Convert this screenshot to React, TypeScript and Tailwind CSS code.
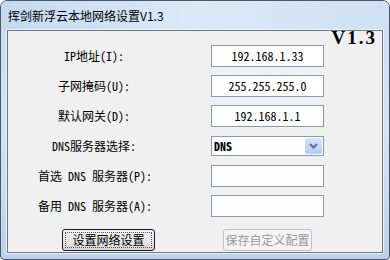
const ui = { fontFamily: '"Noto Sans Mono CJK SC", "Noto Sans CJK SC", monospace' };

type Row = { label: string; value?: string; combo?: boolean };

const rows: Row[] = [
  { label: "IP地址(I):", value: "192.168.1.33" },
  { label: "子网掩码(U):", value: "255.255.255.0" },
  { label: "默认网关(D):", value: "192.168.1.1" },
  { label: "DNS服务器选择:", combo: true },
  { label: "首选 DNS 服务器(P):", value: "" },
  { label: "备用 DNS 服务器(A):", value: "" },
];

function Combo() {
  return (
    <div className="flex h-[20px] w-[113px] items-stretch border border-[#7f9db9] bg-white">
      <span className="flex-1 pl-[2px] text-[12px] font-semibold leading-[18px] text-black">DNS</span>
      <span className="m-px flex w-[17px] items-center justify-center rounded-[2px] bg-gradient-to-b from-[#d8e4fb] to-[#b5c9f5]">
        <svg width="9" height="6" viewBox="0 0 9 6">
          <path d="M1 1 L4.5 4.5 L8 1" fill="none" stroke="#5a6f95" strokeWidth="2" />
        </svg>
      </span>
    </div>
  );
}

export default function App() {
  return (
    <div
      className="flex h-[260px] w-[390px] flex-col overflow-hidden rounded-t-[7px] rounded-b-[4px] border border-[#4a5868] bg-gradient-to-b from-[#c9ddf3] via-[#d3e3f6] to-[#bcd3ed]"
      style={ui}
    >
      <div className="flex h-[29px] shrink-0 items-center pl-[7px] bg-gradient-to-r from-[#c4d9f1] via-[#dce9f8] to-[#cfe0f4]">
        <span className="text-[12px] leading-none text-black" style={{ fontFamily: '"Noto Sans CJK SC", sans-serif' }}>
          挥剑新浮云本地网络设置V1.3
        </span>
      </div>
      <div className="mx-[6px] flex h-[223px] flex-col border border-[#6f7780] bg-[#f0f0f0] shadow-[0_0_0_1px_#e6f0fb]">
        <div className="flex h-[14px] justify-end pr-[5px]">
          <span
            className="text-[19px] font-bold leading-[14px] tracking-[2px] text-black"
            style={{ fontFamily: '"Liberation Serif", serif' }}
          >
            V1.3
          </span>
        </div>
        <div className="flex flex-col gap-[8px]">
          {rows.map((r) => (
            <div key={r.label} className="flex h-[22px] items-center">
              <span className="ml-[30px] w-[112px] whitespace-nowrap text-center text-[12px] leading-none text-black">
                {r.label}
              </span>
              <div className="ml-[61px]">
                {r.combo ? (
                  <Combo />
                ) : (
                  <div className="flex h-[22px] w-[113px] items-center justify-center border border-[#7f9db9] bg-white text-[12px] text-black">
                    {r.value}
                  </div>
                )}
              </div>
            </div>
          ))}
        </div>
        <div className="mt-[12px] flex h-[22px] items-stretch">
          <button
            type="button"
            className="ml-[54px] flex w-[93px] items-center justify-center rounded-[3px] border border-[#15202e] bg-gradient-to-b from-[#f4f4f4] via-[#e8e8e8] to-[#d3d3d3] p-[2px]"
          >
            <span className="flex h-full w-full items-center justify-center border border-dotted border-[#555] text-[12px] leading-none text-black">
              设置网络设置
            </span>
          </button>
          <button
            type="button"
            disabled
            className="ml-[68px] flex w-[89px] items-center justify-center rounded-[3px] border border-[#c0c4c6] bg-[#f4f4f4] text-[12px] leading-none text-[#9a9a9a]"
          >
            保存自定义配置
          </button>
        </div>
      </div>
    </div>
  );
}
